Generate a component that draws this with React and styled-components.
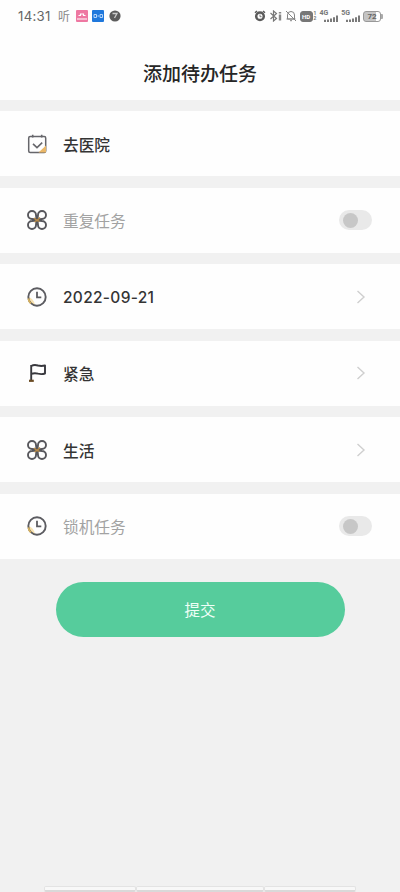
import React, { useState } from "react";
import styled, { createGlobalStyle } from "styled-components";

const tasks = [
  { icon: "calendar", label: "去医院" },
  { icon: "clover", label: "重复任务", type: "switch" },
  { icon: "clock", label: "2022-09-21", type: "link" },
  { icon: "flag", label: "紧急", type: "link" },
  { icon: "clover", label: "生活", type: "link" },
  { icon: "clock", label: "锁机任务", type: "switch" },
];

const CalendarIcon = () => (
  <svg width="22" height="22" viewBox="0 0 22 22" fill="none">
    <rect x="2.7" y="3.4" width="17" height="16" rx="1.5" stroke="#66666b" strokeWidth="1.5" />
    <path d="M6.7 1.8v2.6M15.7 1.8v2.6" stroke="#66666b" strokeWidth="1.6" />
    <path d="M20 12.500v7h-7.500z" fill="#eab768" />
    <path d="M7 10.800l4 3.800 5.200-5" stroke="#66666b" strokeWidth="1.600" />
  </svg>
);

const CloverIcon = () => (
  <svg width="22" height="22" viewBox="0 0 22 22" fill="none">
    <g stroke="#58585d" strokeWidth="1.9">
      <path d="M10.500 10.500L6 10a4 4 0 1 1 4-4z" />
      <path d="M11.500 10.500L12 6a4 4 0 1 1 4 4z" />
      <path d="M11.500 11.500L16 12a4 4 0 1 1-4 4z" />
      <path d="M10.500 11.500L10 16a4 4 0 1 1-4-4z" />
    </g>
    <path d="M8 9l3 2.500 3-3M8.500 13l2.500-2 2.500 1.500" stroke="#b98b48" strokeWidth="1.400" />
  </svg>
);

const ClockIcon = () => (
  <svg width="22" height="22" viewBox="0 0 22 22" fill="none">
    <path d="M2 10.500a9 9 0 0 0 7 9c-.500-4-3-7.500-7-9z" fill="#f8e3b2" />
    <circle cx="11" cy="11" r="8.700" stroke="#5c5c61" strokeWidth="1.900" />
    <path d="M11 5.800v5.500h4.300" stroke="#5c5c61" strokeWidth="1.800" />
    <path d="M2.300 12.500a8.700 8.700 0 0 0 2.600 4.900" stroke="#d8b25e" strokeWidth="1.700" />
  </svg>
);

const FlagIcon = () => (
  <svg width="22" height="22" viewBox="0 0 22 22" fill="none">
    <path
      d="M5.200 4c2.300-1.300 4.500-1.200 6.800-.5 2.300.6 4.300.7 7-.1v8.100c-2.500.8-4.600.8-6.900.2-2.300-.7-4.500-.7-6.900.2"
      stroke="#38383d"
      strokeWidth="1.900"
      strokeLinejoin="round"
    />
    <path d="M5.200 3v15.500" stroke="#38383d" strokeWidth="1.900" />
    <path d="M3 18.800h4.800" stroke="#6b4c24" strokeWidth="2.200" />
  </svg>
);

const icons = {
  calendar: CalendarIcon,
  clover: CloverIcon,
  clock: ClockIcon,
  flag: FlagIcon,
};

const AlarmIcon = () => (
  <svg width="12" height="12" viewBox="0 0 12 12" fill="none">
    <circle cx="6" cy="6.300" r="3.800" stroke="#5a5a5a" strokeWidth="2.500" />
    <path d="M1 2.800L3 1M11 2.800L9 1" stroke="#5a5a5a" strokeWidth="1.500" />
    <path d="M6 4.500v2.200h1.600" stroke="#777" />
  </svg>
);

const BluetoothIcon = () => (
  <svg width="13" height="12" viewBox="0 0 13 12" fill="none">
    <path d="M1.500 3l6 5.500L4.500 11V1l3 2.500-6 5.500" stroke="#777" strokeWidth="1.200" />
    <path d="M11 2v1.500M11 4.500v6" stroke="#888" strokeWidth="2.400" />
  </svg>
);

const MuteIcon = () => (
  <svg width="12" height="12" viewBox="0 0 12 12" fill="none" stroke="#858585">
    <path d="M2.500 9V5a3.500 3.500 0 0 1 7 0v4zM1.500 9h9M5 10.700h2M1 1l10 10" />
  </svg>
);

const SignalBars = () => (
  <svg width="14" height="7" viewBox="0 0 14 8" preserveAspectRatio="none" fill="#7a7a7a">
    <path d="M0 5.500h2V8H0zM3 5h2v3H3zM6 4h2v4H6zM9 2.500h2V8H9zM12 .5h2V8h-2z" />
  </svg>
);

const TaskRow = ({ icon, label, type }) => {
  const [on, setOn] = useState(false);
  const Icon = icons[icon];

  return (
    <Row>
      <Icon />
      <Label $muted={type === "switch"} $latin={icon === "clock" && type === "link"}>
        {label}
      </Label>
      {type === "switch" && (
        <Switch role="switch" aria-checked={on} onClick={() => setOn(!on)}>
          <Knob $on={on} />
        </Switch>
      )}
      {type === "link" && (
        <Chevron width="10" height="16" viewBox="0 0 10 16" fill="none">
          <path d="M1.500 2l6.500 6-6.500 6" stroke="#cfcfcf" strokeWidth="1.400" />
        </Chevron>
      )}
    </Row>
  );
};

const App = () => {
  return (
    <>
      <GlobalStyle />
      <Page>
        <StatusBar>
          <Time>14:31</Time>
          <Carrier>听</Carrier>
          <AppBadge $color="#ee78a2">
            <svg width="12" height="12" viewBox="0 0 12 12" fill="none">
              <path d="M2.500 5.500h2V4h3v1.500h2M1 9h10" stroke="#fff" strokeWidth="1.200" />
            </svg>
          </AppBadge>
          <AppBadge $color="#1f78dc">
            <svg width="12" height="12" viewBox="0 0 12 12" fill="none">
              <path d="M2 4.500h2.500v3H2zM5.500 6H7M8 4.500h2.500v3H8z" stroke="#b5d5fa" />
            </svg>
          </AppBadge>
          <svg width="12" height="12" viewBox="0 0 12 12" fill="none">
            <circle cx="6" cy="6" r="5.600" fill="#5c5c5c" />
            <path d="M3.500 3.500h4.500L5.500 8" stroke="#ccc" strokeWidth="1.300" />
          </svg>
          <System>
            <AlarmIcon />
            <BluetoothIcon />
            <MuteIcon />
            <HdGroup>
              <HdBox>HD</HdBox>
              <HdLines>
                <span>1</span>
                <span>2</span>
              </HdLines>
            </HdGroup>
            <Signal>
              <Network>4G</Network>
              <SignalBars />
            </Signal>
            <Signal>
              <Network>5G</Network>
              <SignalBars />
            </Signal>
            <Battery>
              <BatteryBody>72</BatteryBody>
              <BatteryTip />
            </Battery>
          </System>
        </StatusBar>
        <Header>添加待办任务</Header>
        <List>
          {tasks.map((task) => (
            <TaskRow key={task.label} {...task} />
          ))}
        </List>
        <Submit>提交</Submit>
        <BottomBar>
          <BottomKey $width="92px" />
          <BottomKey $width="128px" />
          <BottomKey $width="92px" />
        </BottomBar>
      </Page>
    </>
  );
};

const GlobalStyle = createGlobalStyle`
  * {
    box-sizing: border-box;
  }
  body {
    margin: 0;
    background: #f1f1f1;
    font-family: "Noto Sans CJK SC", sans-serif;
  }
`;

const Page = styled.div`
  display: flex;
  flex-direction: column;
  height: 892px;
  overflow: hidden;
  background: #f1f1f1;
`;

const StatusBar = styled.div`
  display: flex;
  align-items: center;
  flex: none;
  height: 32px;
  padding: 0 17px 0 18px;
  background: #fefefe;
`;

const Time = styled.span`
  width: 40px;
  font: 13.2px/16px Inter, sans-serif;
  letter-spacing: 0.3px;
  color: #666;
`;

const Carrier = styled.span`
  width: 18px;
  font-size: 12px;
  line-height: 16px;
  color: #888;
`;

const AppBadge = styled.span`
  display: flex;
  width: 12px;
  height: 12px;
  margin-right: 4.3px;
  border-radius: 1px;
  background: ${(props) => props.$color};
`;

const System = styled.div`
  display: flex;
  align-items: center;
  gap: 2.8px;
  margin-left: auto;
`;

const HdGroup = styled.div`
  display: flex;
  align-items: center;
  gap: 1px;
  width: 17px;
`;

const HdBox = styled.span`
  width: 13px;
  height: 11px;
  border: 1px solid #777;
  border-radius: 3px;
  background: #777;
  color: #fff;
  font: bold 6px/9px Roboto, sans-serif;
  text-align: center;
`;

const HdLines = styled.span`
  display: flex;
  flex-direction: column;
  font: bold 5px/5px Roboto, sans-serif;
  color: #777;
`;

const Signal = styled.div`
  display: grid;
  width: 19px;
  height: 12px;
  svg {
    grid-area: 1 / 1;
    align-self: end;
    justify-self: end;
  }
`;

const Network = styled.span`
  grid-area: 1 / 1;
  font: bold 7px/7px Roboto, sans-serif;
  color: #777;
`;

const Battery = styled.div`
  display: flex;
  align-items: center;
`;

const BatteryBody = styled.span`
  width: 18px;
  height: 11px;
  border: 1px solid #999;
  border-radius: 3px;
  background: linear-gradient(90deg, #c4c4c4 72%, #fff 72%);
  font: bold 8px/9px Roboto, sans-serif;
  text-align: center;
  color: #666;
`;

const BatteryTip = styled.span`
  width: 2px;
  height: 5px;
  border-radius: 0 1px 1px 0;
  background: #aaa;
`;

const Header = styled.h1`
  flex: none;
  height: 68px;
  margin: 0;
  padding-top: 27px;
  background: #fefefe;
  font-size: 19px;
  font-weight: 500;
  line-height: 28px;
  text-align: center;
  color: #262626;
`;

const List = styled.div`
  display: flex;
  flex-direction: column;
  gap: 11.2px;
  padding-top: 11.2px;
`;

const Row = styled.div`
  display: flex;
  align-items: center;
  height: 65.3px;
  padding: 0 28px 0 26px;
  background: #fefefe;
`;

const Label = styled.span`
  flex: 1;
  margin-left: 15px;
  padding-top: ${(props) => (props.$latin ? "3px" : "2px")};
  font-family: ${(props) => (props.$latin ? "Inter, sans-serif" : "inherit")};
  font-size: ${(props) => (props.$latin ? "15.5px" : "15.7px")};
  font-weight: ${(props) => (props.$muted ? 400 : 500)};
  letter-spacing: ${(props) => (props.$latin ? "0.3px" : "0")};
  line-height: 24px;
  color: ${(props) => (props.$muted ? "#a2a2a2" : "#343434")};
`;

const Switch = styled.button`
  display: flex;
  align-items: center;
  width: 33px;
  height: 20px;
  padding: 0 4px;
  border: none;
  border-radius: 10px;
  background: #e9e9e9;
  cursor: pointer;
`;

const Knob = styled.span`
  width: 15px;
  height: 15px;
  border-radius: 50%;
  background: #c7c7c7;
  transform: translateX(${(props) => (props.$on ? "10px" : "0")});
`;

const Chevron = styled.svg`
  margin-right: 6px;
`;

const Submit = styled.button`
  flex: none;
  width: 289px;
  height: 55px;
  margin: 23px auto 0;
  border: none;
  border-radius: 28px;
  background: #56cc9c;
  color: #effff7;
  font: 400 15.5px/24px "Noto Sans CJK SC", sans-serif;
  cursor: pointer;
`;

const BottomBar = styled.div`
  display: flex;
  justify-content: center;
  margin-top: auto;
`;

const BottomKey = styled.div`
  width: ${(props) => props.$width};
  height: 6px;
  border: 1px solid #e3e3e3;
  border-bottom: 2px solid #d9d9d9;
  border-radius: 2px;
  background: #f8f8f8;
`;

export default App;
